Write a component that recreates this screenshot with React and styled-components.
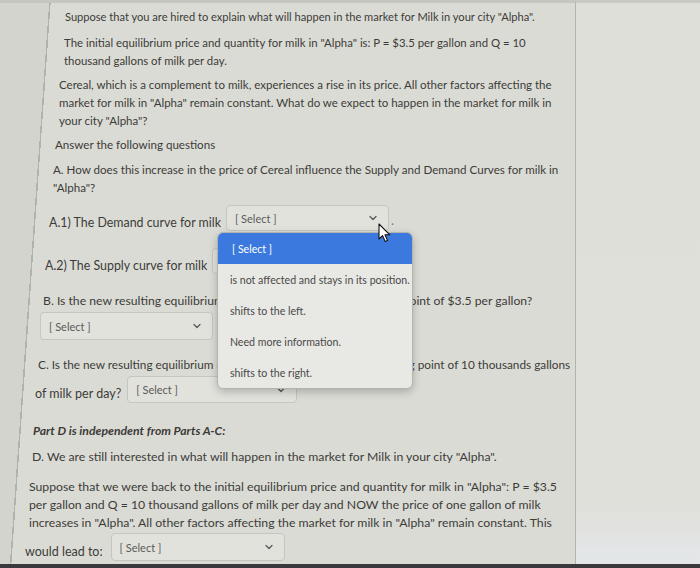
import React from "react";
import styled, { createGlobalStyle } from "styled-components";
import { ChevronDown } from "lucide-react";

const GlobalStyle = createGlobalStyle`
  html, body {
    margin: 0;
    padding: 0;
    background: #d6d6d0;
  }
  body {
    font-family: Lato, "Open Sans", "Liberation Sans", sans-serif;
  }
`;

const Screen = styled.div`
  width: 700px;
  height: 568px;
  display: flex;
  flex-direction: column;
  overflow: hidden;
`;

const Body = styled.div`
  flex: 1;
  display: flex;
  min-height: 0;
`;

// the slanted gutter edge comes from the photo's angle, so it's drawn in the background
const Main = styled.main`
  width: 575px;
  box-sizing: border-box;
  border-top: 3px solid #c6c6c0;
  padding-top: 5px;
  background: linear-gradient(
    94deg,
    #d4d4ce 0 49px,
    #b2b2ac 49px 50.5px,
    #dbdbd5 50.5px
  );
`;

const Side = styled.aside`
  flex: 1;
  border-top: 3px solid #cacac4;
  border-left: 1px solid #b3b3ad;
  background: linear-gradient(180deg, #dfdfda 0%, #e0e0db 90%, #e4e7ea 100%);
`;

const Taskbar = styled.div`
  height: 4px;
  background: #3a3a3c;
`;

const Para = styled.p`
  margin: ${(p) => p.$gap || 0}px 0 0 ${(p) => p.$indent}px;
  font-size: ${(p) => p.$size || 12}px;
  line-height: 18px;
  color: #3b3b39;
  white-space: nowrap;
`;

const PartHeading = styled(Para)`
  font-weight: 700;
  font-style: italic;
`;

const Row = styled.div`
  display: flex;
  align-items: center;
  gap: ${(p) => p.$space || 5}px;
  margin: ${(p) => p.$gap || 0}px 0 0 ${(p) => p.$indent}px;
  font-size: ${(p) => p.$size || 12}px;
  color: #3b3b39;
  white-space: nowrap;
`;

const Label = styled.span`
  padding-top: 8px;
`;

const Period = styled.span`
  margin-left: -3px;
  padding-top: 4px;
  color: #777;
`;

const SelectBox = styled.div`
  position: relative;
  width: ${(p) => p.$w}px;
  height: ${(p) => p.$h || 27}px;
  box-sizing: border-box;
  display: flex;
  align-items: center;
  justify-content: space-between;
  padding: 0 9px 0 8px;
  border: 1px solid #c6c6c0;
  border-radius: 4px;
  background: #e2e2dd;
  color: #5a5a58;
  font-size: 11px;
`;

const Menu = styled.ul`
  position: absolute;
  top: calc(100% + 2px);
  left: -10px;
  z-index: 5;
  width: 194px;
  margin: 0;
  padding: 0;
  list-style: none;
  background: #e8e8e4;
  border: 1px solid #b4b4ae;
  border-radius: 6px;
  box-shadow: 0 3px 8px rgba(0, 0, 0, 0.22);
  overflow: hidden;
`;

const Option = styled.li`
  height: 31px;
  display: flex;
  align-items: center;
  padding-left: ${(p) => (p.$active ? 14 : 12)}px;
  font-size: 10.6px;
  color: ${(p) => (p.$active ? "#ffffff" : "#4a4a48")};
  background: ${(p) => (p.$active ? "#3b79de" : "transparent")};
  white-space: nowrap;
`;

const Pointer = styled.svg`
  position: absolute;
  left: 151px;
  top: 17px;
  z-index: 6;
`;

const Select = ({ w, h, children }) => (
  <SelectBox $w={w} $h={h}>
    <span>[ Select ]</span>
    <ChevronDown size={12} strokeWidth={2.6} color="#5a5a58" />
    {children}
  </SelectBox>
);

const options = [
  "is not affected and stays in its position.",
  "shifts to the left.",
  "Need more information.",
  "shifts to the right.",
];

const App = () => (
  <Screen>
    <GlobalStyle />
    <Body>
      <Main>
        <Para $indent={65} $size={11.1}>
          Suppose that you are hired to explain what will happen in the market
          for Milk in your city "Alpha".
        </Para>
        <Para $indent={64} $gap={8} $size={11.4}>
          The initial equilibrium price and quantity for milk in "Alpha" is: P
          = $3.5 per gallon and Q = 10
          <br />
          thousand gallons of milk per day.
        </Para>
        <Para $indent={59} $gap={6} $size={11.5}>
          Cereal, which is a complement to milk, experiences a rise in its
          price. All other factors affecting the
          <br />
          market for milk in "Alpha" remain constant. What do we expect to
          happen in the market for milk in
          <br />
          your city "Alpha"?
        </Para>
        <Para $indent={55} $gap={6} $size={11.6}>
          Answer the following questions
        </Para>
        <Para $indent={53} $gap={7} $size={11.6}>
          A. How does this increase in the price of Cereal influence the Supply
          and Demand Curves for milk in
          <br />
          "Alpha"?
        </Para>

        <Row $indent={49} $gap={8} $size={12.4}>
          <Label>A.1) The Demand curve for milk</Label>
          <Select w={163} h={26}>
            <Menu>
              <Option $active>[ Select ]</Option>
              {options.map((o) => (
                <Option key={o}>{o}</Option>
              ))}
            </Menu>
            <Pointer width="13" height="20" viewBox="0 0 13 20">
              <path
                d="M1 1 L1 16 L4.6 12.6 L7.2 18.6 L9.6 17.6 L7 11.8 L11.8 11.8 Z"
                fill="#ffffff"
                stroke="#111111"
                strokeWidth="1.1"
                strokeLinejoin="round"
              />
            </Pointer>
          </Select>
          <Period>.</Period>
        </Row>

        <Row $indent={45} $gap={17} $size={12.4}>
          <Label>A.2) The Supply curve for milk</Label>
          <Select w={170} h={26} />
        </Row>

        <Para $indent={43} $gap={18} $size={12.2}>
          B. Is the new resulting equilibrium price higher than the initial
          price point of $3.5 per gallon?
        </Para>
        <Row $indent={40} $gap={2}>
          <Select w={173} h={28} />
        </Row>

        <Para $indent={38} $gap={16} $size={11.8}>
          C. Is the new resulting equilibrium quantity higher than the initial
          starting point of 10 thousands gallons
        </Para>
        <Row $indent={35} $gap={2} $size={12.5} $space={6}>
          <Label>of milk per day?</Label>
          <Select w={170} h={27} />
        </Row>

        <PartHeading $indent={33} $gap={19} $size={12.2}>
          Part D is independent from Parts A-C:
        </PartHeading>
        <Para $indent={32} $gap={8} $size={12.25}>
          D. We are still interested in what will happen in the market for Milk
          in your city "Alpha".
        </Para>
        <Para $indent={29} $gap={12} $size={12.25}>
          Suppose that we were back to the initial equilibrium price and
          quantity for milk in "Alpha": P = $3.5
          <br />
          per gallon and Q = 10 thousand gallons of milk per day and NOW the
          price of one gallon of milk
          <br />
          increases in "Alpha". All other factors affecting the market for milk
          in "Alpha" remain constant. This
        </Para>
        <Row $indent={25} $gap={1} $size={12.5} $space={8}>
          <Label>would lead to:</Label>
          <Select w={174} h={28} />
        </Row>
      </Main>
      <Side />
    </Body>
    <Taskbar />
  </Screen>
);

export default App;
